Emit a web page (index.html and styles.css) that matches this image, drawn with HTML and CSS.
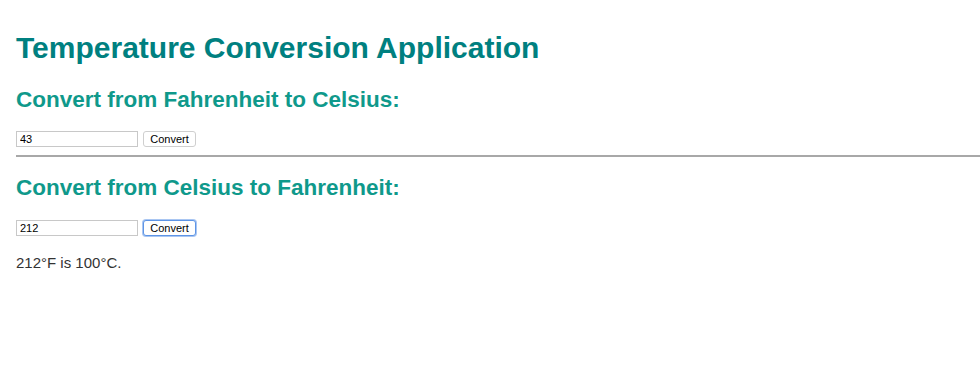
FILE: index.html
```html
<!DOCTYPE html>
<html>
<head>
<meta charset="utf-8">
<link rel="stylesheet" href="styles.css">
</head>
<body>
<h1 class="title">Temperature Conversion Application</h1>
<section class="block">
  <h2 class="subtitle">Convert from Fahrenheit to Celsius:</h2>
  <form class="row">
    <input class="field" type="text" value="43">
    <button class="btn" type="button">Convert</button>
  </form>
</section>
<hr class="rule">
<section class="block block-second">
  <h2 class="subtitle">Convert from Celsius to Fahrenheit:</h2>
  <form class="row">
    <input class="field" type="text" value="212">
    <button class="btn btn-focus" type="button">Convert</button>
  </form>
  <p class="result">212°F is 100°C.</p>
</section>
</body>
</html>
```
FILE: styles.css
```css
html, body {
  background: #fff;
}
body {
  margin: 0 0 0 16px;
  padding-top: 1px;
  font-family: "Liberation Sans", Arial, Helvetica, sans-serif;
  color: #333;
}
.title {
  margin: 30px 0 0 0;
  font-size: 30px;
  line-height: 34px;
  font-weight: bold;
  color: #008080;
}
.subtitle {
  margin: 22px 0 0 0;
  font-size: 22.5px;
  line-height: 26px;
  font-weight: bold;
  color: #0f998b;
}
.block-second .subtitle {
  margin-top: 18px;
}
.row {
  display: flex;
  align-items: center;
  gap: 5px;
  margin: 18px 0 0 0;
}
.block-second .row {
  margin-top: 19px;
}
.field {
  box-sizing: border-box;
  width: 122px;
  height: 16px;
  margin: 0;
  padding: 0 3px;
  border: 1px solid #c8c8c8;
  font-family: "Liberation Sans", Arial, sans-serif;
  font-size: 11px;
  color: #000;
  background: #fff;
}
.btn {
  box-sizing: border-box;
  height: 16px;
  width: 53px;
  margin: 0;
  padding: 0;
  border: 1px solid #cfcfcf;
  border-radius: 3px;
  background: #fff;
  font-family: "Liberation Sans", Arial, sans-serif;
  font-size: 11px;
  color: #000;
}
.btn-focus {
  border: 1px solid #5e95e6;
  box-shadow: 0 0 0 1px #a9c6f2;
}
.rule {
  margin: 8px 0 0 0;
  height: 0;
  border: 0;
  border-top: 2px solid #a8a8a8;
}
.result {
  margin: 18px 0 0 0;
  font-size: 15px;
  line-height: 18px;
  color: #333;
}
```
